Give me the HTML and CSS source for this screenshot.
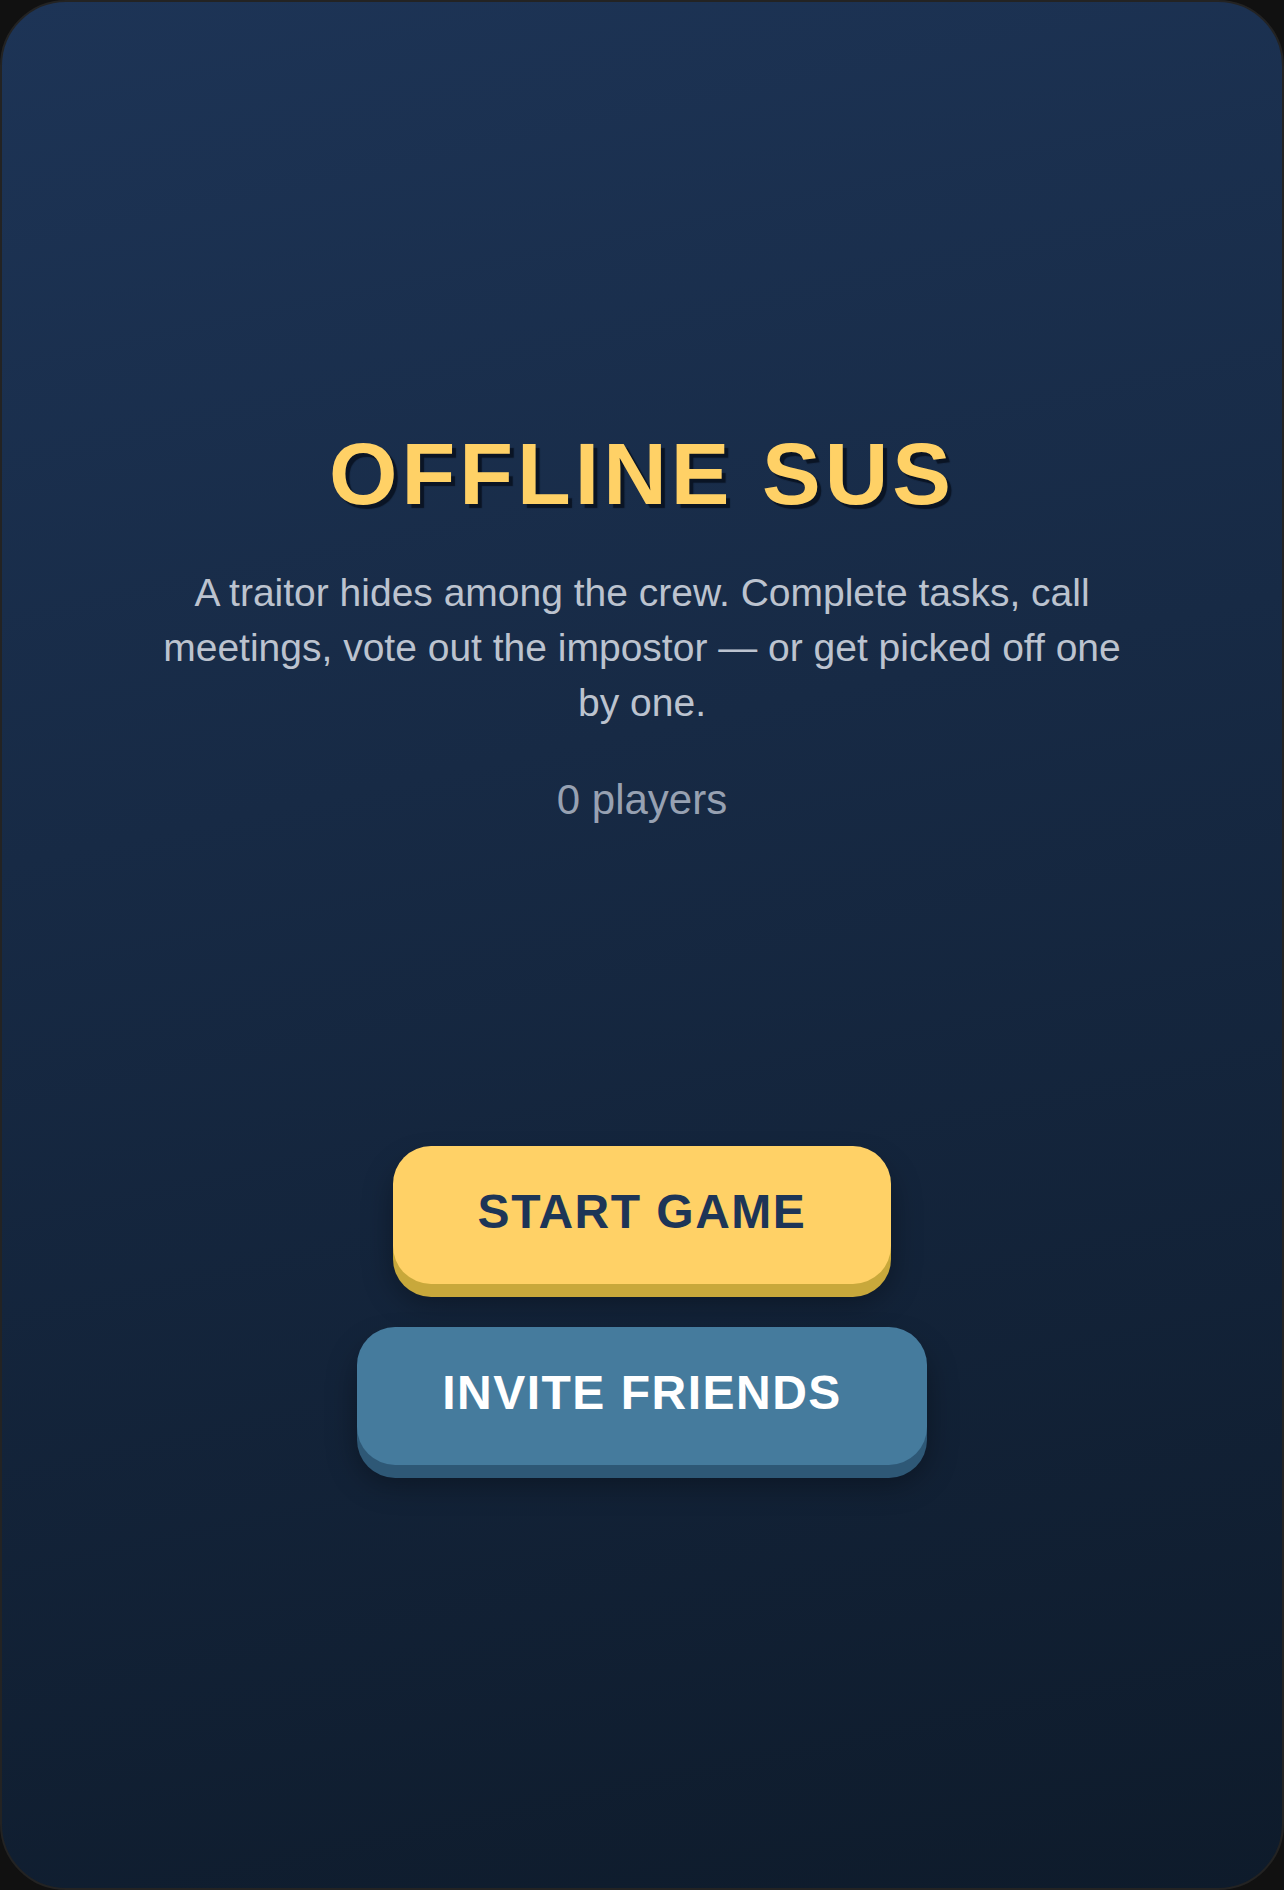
FILE: index.html
```html
<!DOCTYPE html>
<html lang="en">
<head>
<meta charset="utf-8">
<title>Offline Sus</title>
<link rel="stylesheet" href="styles.css">
</head>
<body>
<div class="device">
  <main class="screen">
    <section class="hero">
      <h1 class="title">OFFLINE SUS</h1>
      <p class="tagline">A traitor hides among the crew. Complete tasks, call meetings, vote out the impostor — or get picked off one by one.</p>
      <p class="count">0 players</p>
    </section>
    <section class="actions">
      <button class="btn btn-start" type="button">START GAME</button>
      <button class="btn btn-invite" type="button">INVITE FRIENDS</button>
    </section>
  </main>
</div>
</body>
</html>
```
FILE: styles.css
```css
html, body {
  margin: 0;
  padding: 0;
  background: #111111;
}

body {
  font-family: "Liberation Sans", Arial, sans-serif;
}

.device {
  width: 1284px;
  height: 1890px;
  box-sizing: border-box;
  border-radius: 66px;
  border: 2px solid #232323;
  overflow: hidden;
  background: linear-gradient(168deg, #1d3456 0%, #172a45 40%, #0e1b2b 100%);
}

.screen {
  height: 100%;
  box-sizing: border-box;
  padding-top: 419px;
  display: flex;
  flex-direction: column;
  align-items: center;
}

.hero {
  display: flex;
  flex-direction: column;
  align-items: center;
  text-align: center;
}

.title {
  margin: 0;
  font-size: 88px;
  line-height: 1.2;
  font-weight: 700;
  letter-spacing: 4px;
  color: #ffd166;
  text-shadow: 4px 4px 1px rgba(5, 12, 24, 0.75);
}

.tagline {
  margin: 38px 0 0;
  max-width: 985px;
  font-size: 39px;
  line-height: 55px;
  color: #bcc3cf;
}

.count {
  margin: 46px 0 0;
  font-size: 42px;
  line-height: 48px;
  color: #97a1b2;
}

.actions {
  margin-top: 322px;
  display: flex;
  flex-direction: column;
  align-items: center;
  gap: 43px;
}

.btn {
  font-family: "Liberation Sans", Arial, sans-serif;
  font-size: 48px;
  line-height: 57px;
  font-weight: 700;
  letter-spacing: 1.5px;
  padding: 37px 85px 44px;
  border: none;
  border-radius: 38px;
  cursor: pointer;
}

.btn-start {
  background: #ffd166;
  color: #1d3557;
  box-shadow: 0 13px 0 #c8a83b, 0 18px 30px rgba(0, 0, 0, 0.35);
}

.btn-invite {
  background: #457b9d;
  color: #ffffff;
  box-shadow: 0 13px 0 #2e5876, 0 18px 30px rgba(0, 0, 0, 0.35);
}
```
